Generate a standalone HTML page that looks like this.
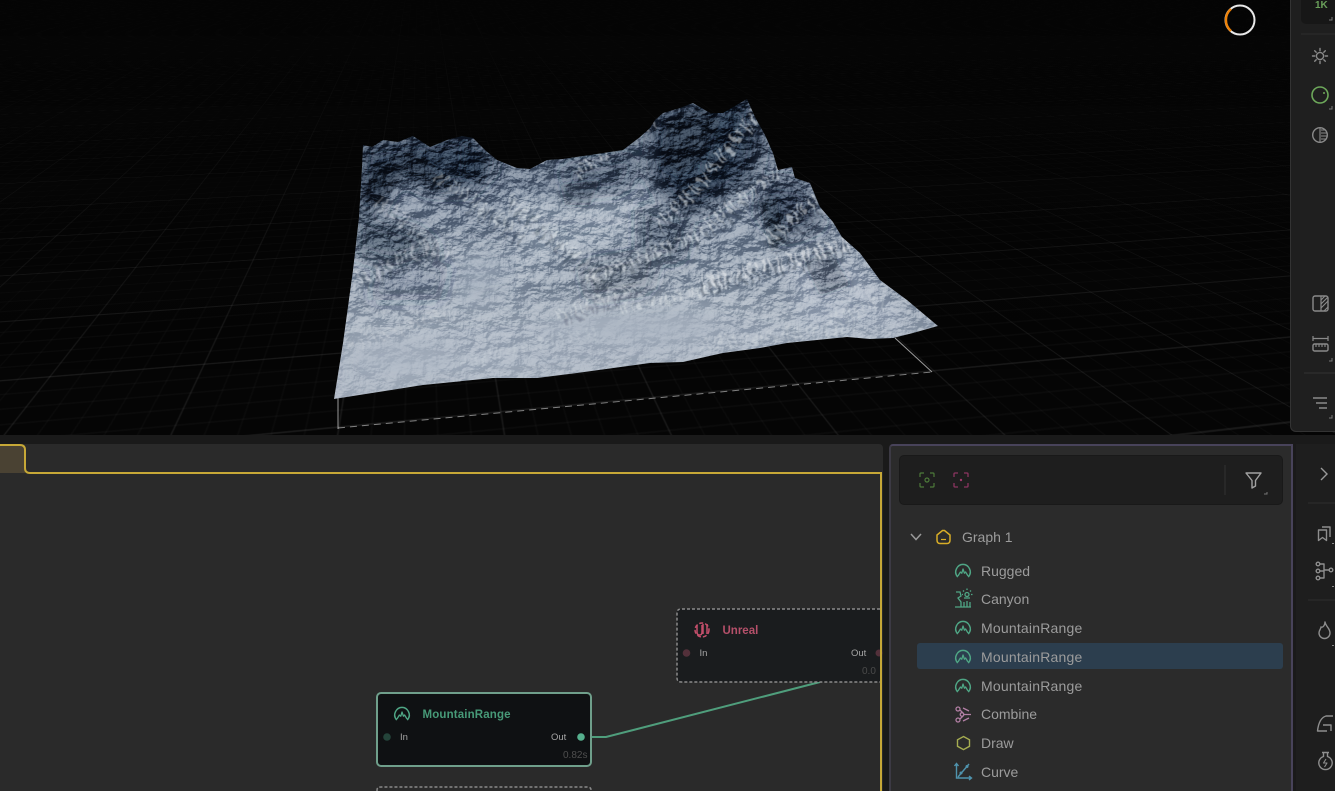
<!DOCTYPE html>
<html lang="en">
<head>
<meta charset="utf-8">
<title>Terrain graph editor</title>
<style>
html,body{margin:0;padding:0;width:1335px;height:791px;overflow:hidden;background:#1a1a1a;font-family:"Liberation Sans",sans-serif}
.abs{position:absolute}
#view{left:0;top:0;width:1335px;height:435px;background:#050505;overflow:hidden}
#grid{position:absolute;left:0;top:0;width:4600px;height:3300px;transform-origin:0 0;
transform:matrix3d(1.773,-.0288,0,.000303,.703,-.159,0,.001674,0,0,1,0,-2355.1,516.02,0,.0736);
background-image:
linear-gradient(to right,rgba(255,255,255,.055) 1px,transparent 1px),
linear-gradient(to bottom,rgba(255,255,255,.055) 2px,transparent 2px),
linear-gradient(to right,rgba(255,255,255,.022) 1px,transparent 1px),
linear-gradient(to bottom,rgba(255,255,255,.022) 2px,transparent 2px);
background-size:100px 100px,100px 100px,20px 20px,20px 20px}
#fade{left:0;top:0;width:1335px;height:435px;background:linear-gradient(to bottom,rgba(5,5,5,.9),rgba(5,5,5,.35) 45%,rgba(5,5,5,0) 85%)}
#toolbar{left:1290px;top:0;width:45px;height:432px;background:#1f1f1f;border-left:1px solid #333;border-bottom:1px solid #333;border-radius:0 0 0 6px;box-sizing:border-box}
#graph{left:0;top:444px;width:883px;height:347px;background:#2a2a2a;border-radius:0 4px 0 0}
#side{left:889px;top:444px;width:404px;height:347px;background:#2b2b2b;border-top:2px solid #48435a;border-left:2px solid #3c3a44;border-right:2px solid #48435a;box-sizing:border-box;border-radius:4px 0 0 0}
#rail{left:1296px;top:444px;width:39px;height:347px;background:#1e1e1e}
#bar{left:899px;top:455px;width:384px;height:50px;background:#1e1e1e;border:1px solid #191919;box-sizing:border-box;border-radius:5px}
#hl{left:917px;top:643px;width:366px;height:26px;background:#2c3e4e;border-radius:3px}
#over{left:0;top:0}
text{font-family:"Liberation Sans",sans-serif}
</style>
</head>
<body>
<div class="abs" id="view">
  <div id="grid"></div>
  <div class="abs" id="fade"></div>
</div>
<div class="abs" id="toolbar"></div>
<div class="abs" id="graph"></div>
<div class="abs" id="side"></div>
<div class="abs" id="rail"></div>
<div class="abs" id="bar"></div>
<div class="abs" id="hl"></div>

<svg class="abs" id="over" width="1335" height="791" viewBox="0 0 1335 791" xmlns="http://www.w3.org/2000/svg">
<defs>
  <clipPath id="terrain"><path id="tp" d="M363 145L372 147 383 140 398 142 413 136 430 147 447 140 462 136 473 138 485 150 497 160 517 168 530 169 547 160 563 159 590 155 623 150 640 137 650 128 655 120 663 113 680 108 693 103 710 113 723 113 735 106 747 99 755 117 765 135 773 153 778 170 792 167 795 178 810 183 820 207 833 222 842 237 860 253 880 280 907 300 938 326 913 333 893 338 870 339 847 337 817 340 787 343 760 348 723 353 683 362 650 363 577 373 537 378 493 378 423 385 334 399 343 343 353 270 359 217 362 167Z"/></clipPath>
  <linearGradient id="tg" x1="0" y1="100" x2="0" y2="400" gradientUnits="userSpaceOnUse">
    <stop offset="0" stop-color="#4a586b"/><stop offset=".3" stop-color="#7b899c"/><stop offset=".55" stop-color="#98a4b3"/><stop offset=".8" stop-color="#a8b2bf"/><stop offset="1" stop-color="#b0b8c5"/>
  </linearGradient>
  <filter id="b12" x="-30%" y="-30%" width="160%" height="160%"><feGaussianBlur stdDeviation="12"/></filter>
  <filter id="b8" x="-30%" y="-30%" width="160%" height="160%"><feGaussianBlur stdDeviation="8"/></filter>
  <filter id="b3" x="-30%" y="-30%" width="160%" height="160%"><feGaussianBlur stdDeviation="3"/></filter>
  <filter id="rough" filterUnits="userSpaceOnUse" x="320" y="90" width="640" height="320">
    <feTurbulence type="fractalNoise" baseFrequency=".08" numOctaves="3" seed="5" result="d"/>
    <feDisplacementMap in="SourceGraphic" in2="d" scale="13" xChannelSelector="R" yChannelSelector="G"/>
    <feGaussianBlur stdDeviation=".4"/>
  </filter>
  <linearGradient id="mg" x1="0" y1="100" x2="0" y2="400" gradientUnits="userSpaceOnUse">
    <stop offset="0" stop-color="#fff"/><stop offset=".6" stop-color="#ddd"/><stop offset=".85" stop-color="#777"/><stop offset="1" stop-color="#555"/>
  </linearGradient>
  <mask id="fadem" maskUnits="userSpaceOnUse" x="300" y="80" width="660" height="340">
    <rect x="300" y="80" width="660" height="340" fill="url(#mg)"/>
    <g filter="url(#b12)" fill="#000">
      <ellipse cx="630" cy="325" rx="95" ry="18" opacity=".85"/>
      <ellipse cx="400" cy="355" rx="60" ry="14" opacity=".7"/>
      <ellipse cx="480" cy="280" rx="26" ry="30" opacity=".6" transform="rotate(30 480 280)"/>
      <ellipse cx="575" cy="190" rx="35" ry="8" opacity=".5"/>
    </g>
  </mask>
  <filter id="n1" x="0" y="0" width="100%" height="100%" color-interpolation-filters="sRGB">
    <feTurbulence type="fractalNoise" baseFrequency=".05 .065" numOctaves="5" seed="23" result="t"/>
    <feDiffuseLighting in="t" surfaceScale="6" diffuseConstant="1" lighting-color="#fff" result="l"><feDistantLight azimuth="60" elevation="48"/></feDiffuseLighting>
    <feComponentTransfer><feFuncR type="linear" slope="1.4" intercept="-.52"/><feFuncG type="linear" slope="1.4" intercept="-.52"/><feFuncB type="linear" slope="1.4" intercept="-.52"/></feComponentTransfer>
  </filter>
  <symbol id="mtn" overflow="visible" viewBox="-10 -10 20 20">
    <path d="M-5.6 5.600C-9.800 .5-5.500-6.600 0-6.600S9.800 .5 5.600 5.600" fill="none" stroke="currentColor" stroke-width="1.500" stroke-linecap="round"/>
    <path d="M-4.800 4.600L-2.600 1-1.200 2.200 0-2 1.400 2.200 2.600 1 4.800 4.600" fill="none" stroke="currentColor" stroke-width="1.300" stroke-linejoin="round" stroke-linecap="round"/>
  </symbol>
</defs>

<!-- terrain helper outline -->
<path d="M338 428L932 372" stroke="#cfcfcf" stroke-opacity=".6" stroke-width="1" stroke-dasharray="7 5" fill="none"/>
<path d="M895 338L932 372M338 398V429" stroke="#d8d8d8" stroke-opacity=".7" stroke-width="1" fill="none"/>

<!-- terrain -->
<g clip-path="url(#terrain)" style="isolation:isolate">
  <rect x="320" y="90" width="640" height="320" fill="url(#tg)"/>
  <g filter="url(#b8)" fill="#aeb8c5">
    <path d="M500 200L660 190 640 240 540 260Z" opacity=".75"/>
    <path d="M340 320L700 290 920 330 700 370 340 400Z" opacity=".7"/>
    <path d="M790 260L860 265 910 325 800 335Z" opacity=".8"/>
    <path d="M400 240L560 240 520 300 380 320Z" opacity=".45"/>
  </g>
  <g filter="url(#b8)" fill="#27344a">
    <path d="M362 145L470 132 495 165 470 190 430 190 400 175 380 205 356 215Z"/>
    <path d="M655 118L747 98 762 135 752 178 720 200 690 215 672 205 650 175Z"/>
    <path d="M768 180L805 185 822 225 785 238 760 215Z" opacity=".8"/>
    <path d="M356 215L420 232 440 252 390 262 354 255Z" opacity=".65"/>
    <path d="M560 168L640 155 625 190 575 195Z" opacity=".45"/>
    <path d="M640 205L690 225 680 262 640 250Z" opacity=".45"/>
    <path d="M580 265L660 250 650 290 590 300Z" opacity=".3"/>
    <path d="M380 260L450 265 440 300 370 300Z" opacity=".25"/>
  </g>
  <g filter="url(#b3)" fill="#1f2b3e">
    <path d="M372 168L412 148 452 185 436 190 406 172 378 205 360 200Z" opacity=".75"/>
    <path d="M462 140L490 160 482 185 462 175Z" opacity=".65"/>
    <path d="M665 120L700 108 722 120 700 160 680 175 660 165Z" opacity=".75"/>
    <path d="M722 118L744 104 736 150 715 175 700 172Z" opacity=".65"/>
    <path d="M760 200L778 196 786 240 772 250Z" opacity=".6"/>
    <path d="M805 262L830 250 850 285 820 295Z" opacity=".35"/>
    <path d="M560 185L600 180 590 205 565 205Z" opacity=".35"/>
  </g>
  <g mask="url(#fadem)" style="mix-blend-mode:soft-light">
    <rect x="320" y="90" width="640" height="320" filter="url(#n1)"/>
  </g>
  <!-- dark ribs on flanks -->
  <g fill="none" stroke="#1d2738" stroke-dasharray="2 5 3 3 1.500 6 2.500 4" stroke-linecap="butt" filter="url(#rough)" opacity=".8">
    <path d="M765 118L705 192 662 232" stroke-width="15" stroke-opacity=".45" stroke-dashoffset="3"/>
    <path d="M820 205L772 248" stroke-width="15" stroke-opacity=".45" stroke-dashoffset="3"/>
    <path d="M852 250L702 290" stroke-width="14" stroke-opacity=".4" stroke-dashoffset="3"/>
    <path d="M782 180L702 238" stroke-width="13" stroke-opacity=".4" stroke-dashoffset="3"/>
    <path d="M655 130L580 178" stroke-width="12" stroke-opacity=".35" stroke-dashoffset="3"/>
    <path d="M505 200L560 250 605 292" stroke-width="13" stroke-opacity=".3" stroke-dashoffset="3"/>
    <path d="M372 205L442 262" stroke-width="15" stroke-opacity=".35" stroke-dashoffset="3"/>
    <path d="M432 182L522 242" stroke-width="14" stroke-opacity=".35" stroke-dashoffset="3"/>
    <path d="M590 285L700 242" stroke-width="13" stroke-opacity=".3" stroke-dashoffset="3"/>
    <path d="M560 322L640 292" stroke-width="11" stroke-opacity=".25" stroke-dashoffset="3"/>
    <path d="M360 285L432 252" stroke-width="14" stroke-opacity=".3" stroke-dashoffset="3"/>
  </g>
  <!-- lit ribs on flanks -->
  <g fill="none" stroke="#eceff1" stroke-dasharray="2 4 3 6 1.500 3 2.500 5" stroke-linecap="butt" filter="url(#rough)">
    <path d="M758 112L698 186 656 226" stroke-width="13" stroke-opacity=".5"/>
    <path d="M815 198L767 241" stroke-width="13" stroke-opacity=".5"/>
    <path d="M850 243L700 283" stroke-width="13" stroke-opacity=".55"/>
    <path d="M779 172L699 230" stroke-width="12" stroke-opacity=".5"/>
    <path d="M652 124L577 172" stroke-width="11" stroke-opacity=".45"/>
    <path d="M510 195L565 245 610 287" stroke-width="12" stroke-opacity=".4"/>
    <path d="M378 200L448 257" stroke-width="14" stroke-opacity=".35"/>
    <path d="M438 177L528 237" stroke-width="13" stroke-opacity=".4"/>
    <path d="M588 278L698 235" stroke-width="12" stroke-opacity=".45"/>
    <path d="M556 316L636 286" stroke-width="10" stroke-opacity=".4"/>
    <path d="M620 310L730 285" stroke-width="10" stroke-opacity=".4"/>
    <path d="M358 279L430 246" stroke-width="12" stroke-opacity=".35"/>
    <path d="M342 350L450 312" stroke-width="12" stroke-opacity=".18"/>
    <path d="M830 320L885 300" stroke-width="14" stroke-opacity=".25"/>
    <path d="M455 362L600 332" stroke-width="12" stroke-opacity=".15"/>
    <path d="M700 345L860 325" stroke-width="14" stroke-opacity=".25"/>
  </g>
</g>

<!-- loader ring -->
<circle cx="1240" cy="20" r="14.500" fill="none" stroke="#e8e8e8" stroke-width="2"/>
<path d="M1231 9A14.500 14.500 0 0 0 1231 31" fill="none" stroke="#ee8208" stroke-width="2.400"/>

<!-- top toolbar -->
<rect x="1301" y="-6" width="40" height="30" rx="5" fill="#171717"/>
<text x="1315" y="8" font-size="10" font-weight="700" fill="#6aa05a">1K</text>
<path d="M1332 17V20H1329" stroke="#777" stroke-width="1" fill="none"/>
<path d="M1301 34H1335" stroke="#2c2c2c" stroke-width="1"/>
<g fill="none" stroke="#8a8a8a" stroke-width="1.400">
  <circle cx="1320" cy="56" r="3.600"/>
  <path d="M1320 48.500v2.200M1320 61.300v2.200M1312.500 56h2.200M1325.300 56h2.200M1314.700 50.700l1.500 1.500M1323.800 59.800l1.500 1.500M1314.700 61.300l1.500-1.500M1323.800 52.200l1.500-1.500" stroke-linecap="round"/>
  <circle cx="1320" cy="135" r="7.300"/>
  <path d="M1320 127.700v14.600M1321 130h4.500M1321 133h6M1321 136h6M1321 139h4.500" stroke-width="1.100"/>
  <rect x="1313" y="296" width="15" height="15" rx="2"/>
  <path d="M1321 296v15M1321 300l4-4M1321 304l7-7M1321 308l7-7M1324 311l4-4" stroke-width="1.200"/>
  <path d="M1313 338.500h15M1313 336v5M1328 336v5" stroke-width="1.200"/>
  <rect x="1313" y="344" width="15" height="7" rx="1.500"/>
  <path d="M1316 344v3M1319 344v3M1322 344v3M1325 344v3" stroke-width="1.100"/>
  <path d="M1313 398h14M1316 403h11M1319 408h8" stroke-width="1.400"/>
</g>
<circle cx="1320" cy="95" r="8" fill="none" stroke="#6da85a" stroke-width="1.600"/>
<circle cx="1324" cy="93" r="1" fill="#6da85a"/>
<path d="M1332 106V109H1329M1332 358V361H1329M1332 415V418H1329" stroke="#777" stroke-width="1" fill="none"/>
<path d="M1304 373H1335" stroke="#333" stroke-width="1"/>

<!-- graph frame -->
<rect x="0" y="446" width="25" height="27" fill="#4a4233"/>
<path d="M0 445H20Q25 445 25 450V468Q25 473 30 473H881V791" fill="none" stroke="#c7a837" stroke-width="2"/>

<!-- edge -->
<path d="M592 737H606L820 682" fill="none" stroke="#4f9e7c" stroke-width="2"/>

<!-- Unreal node -->
<path d="M880 609H681Q677 609 677 613V678Q677 682 681 682H880Z" fill="#1a1c1e"/>
<path d="M880 609H681Q677 609 677 613V678Q677 682 681 682H880" fill="none" stroke="#8a8a8a" stroke-width="1.500" stroke-dasharray="3 2"/>
<g fill="none" stroke="#c44f6b" stroke-width="1.500">
  <circle cx="702" cy="630" r="7" stroke-dasharray="4 2"/>
  <path d="M697 625v7q0 3 2.500 3t2.500-3v-7M703 624v10M707 624v10"/>
</g>
<text x="722.500" y="634" font-size="11.500" font-weight="700" fill="#b5506a">Unreal</text>
<circle cx="686.500" cy="653" r="3.800" fill="#53303a"/>
<text x="699.500" y="656" font-size="9.500" fill="#a5a5a5">In</text>
<text x="851" y="656" font-size="9.500" fill="#a5a5a5">Out</text>
<circle cx="879" cy="653" r="3.500" fill="#53303a"/>
<text x="862" y="674" font-size="10" fill="#4a4a4a" font-family="Liberation Mono">0.0</text>
<path d="M881 473V791" stroke="#c7a837" stroke-width="2" fill="none"/>

<!-- MountainRange node -->
<rect x="377" y="693" width="214" height="73" rx="4" fill="#0f1113" stroke="#6f9f8b" stroke-width="2"/>
<use href="#mtn" x="392" y="704" width="20" height="20" color="#4fa685"/>
<text x="422.500" y="718" font-size="11.500" font-weight="700" letter-spacing=".15" fill="#479a78">MountainRange</text>
<circle cx="387" cy="737" r="3.800" fill="#24443a"/>
<text x="400" y="740" font-size="9.500" fill="#a5a5a5">In</text>
<text x="551" y="740" font-size="9.500" fill="#a5a5a5">Out</text>
<circle cx="581" cy="737" r="3.800" fill="#56b08e"/>
<text x="563" y="758" font-size="10" fill="#4e4e4e" font-family="Liberation Mono">0.82s</text>
<path d="M377 791V790Q377 787 381 787H587Q591 787 591 790V791" fill="none" stroke="#8a8a8a" stroke-width="1.500" stroke-dasharray="3 2"/>

<!-- side toolbar icons -->
<g fill="none" stroke="#4d7a3a" stroke-width="1.200">
  <path d="M920 477v-3q0-1 1-1h3M930 473h3q1 0 1 1v3M934 483v3q0 1-1 1h-3M924 487h-3q-1 0-1-1v-3"/>
  <circle cx="927" cy="480" r="2"/>
</g>
<g fill="none" stroke="#8a3560" stroke-width="1.300">
  <path d="M954 477v-3q0-1 1-1h3M964 473h3q1 0 1 1v3M968 483v3q0 1-1 1h-3M958 487h-3q-1 0-1-1v-3"/>
</g>
<circle cx="961" cy="480" r="1.200" fill="#a03a6c"/>
<path d="M1225 465V495" stroke="#2b2b2b" stroke-width="1.500"/>
<path d="M1246 473H1261L1255.500 480.500V486L1252 488V480.500Z" fill="none" stroke="#a2a2a2" stroke-width="1.400" stroke-linejoin="round"/>
<path d="M1267 492V494H1264" stroke="#777" stroke-width="1" fill="none"/>

<!-- tree -->
<path d="M911 534L916 539.500 921 534" fill="none" stroke="#9a9a9a" stroke-width="1.500"/>
<path d="M937 538V535L942.500 530.500 944.500 530.500 950 535V540Q950 543.500 947 543.500H940Q937 543.500 937 540Z" fill="none" stroke="#d8ad27" stroke-width="1.500"/>
<path d="M941 539.500H946" stroke="#d8ad27" stroke-width="1.200"/>
<g font-size="14" fill="#9c9c9c">
  <text x="962" y="542">Graph 1</text>
  <text x="981" y="576">Rugged</text>
  <text x="981" y="604">Canyon</text>
  <text x="981" y="633" letter-spacing=".2">MountainRange</text>
  <text x="981" y="662" letter-spacing=".2">MountainRange</text>
  <text x="981" y="691" letter-spacing=".2">MountainRange</text>
  <text x="981" y="719">Combine</text>
  <text x="981" y="748">Draw</text>
  <text x="981" y="777">Curve</text>
</g>
<use href="#mtn" x="953" y="561" width="20" height="20" color="#4fa685"/>
<use href="#mtn" x="953" y="618" width="20" height="20" color="#4fa685"/>
<use href="#mtn" x="953" y="647" width="20" height="20" color="#4fa685"/>
<use href="#mtn" x="953" y="676" width="20" height="20" color="#4fa685"/>
<g fill="none" stroke="#4fa685" stroke-width="1.300">
  <path d="M955 607H971M956 592H960L961 596 958 598 961 602V607M964 602V607M967 601V607M970 602V607"/>
  <circle cx="967" cy="594.500" r="2"/>
  <path d="M967 590v-1.500M971 594.500h1.500M963 594.500h-1M970 591.500l1-1M964 591.500l-1-1M964 598h6"/>
</g>
<g fill="none" stroke="#b27fa4" stroke-width="1.300">
  <circle cx="958" cy="709" r="2"/><circle cx="958" cy="720" r="2"/><circle cx="962" cy="714.500" r="1.800"/>
  <path d="M960 710L963 713M960 719L963 716M964 714.500H971M963 708L969 711M963 721L969 718"/>
</g>
<path d="M963.500 736.500L969.500 739.800V746.300L963.500 749.600 957.500 746.300V739.800Z" fill="none" stroke="#a6ad51" stroke-width="1.400"/>
<g fill="none" stroke="#4f93ad" stroke-width="1.400">
  <path d="M956.500 764V778H971M954.500 766L956.500 763.500 958.500 766M969 776L971.500 778 969 780M958 777L969 764"/>
</g>
<circle cx="961" cy="773" r="1.500" fill="#4f93ad"/><circle cx="967" cy="766.500" r="1.500" fill="#4f93ad"/>

<!-- right rail -->
<path d="M1321 468L1327 474 1321 480" fill="none" stroke="#9a9a9a" stroke-width="1.400"/>
<path d="M1308 503H1335M1308 600H1335" stroke="#2f2f2f" stroke-width="1"/>
<g fill="none" stroke="#8e8e8e" stroke-width="1.400" stroke-linejoin="round">
  <path d="M1318.500 530H1326.500V540.500L1322.500 537.500 1318.500 540.500Z"/>
  <path d="M1322 527H1330V537"/>
  <circle cx="1318" cy="564" r="1.800"/><circle cx="1318" cy="571" r="1.800"/><circle cx="1318" cy="578" r="1.800"/><circle cx="1331" cy="570" r="1.800"/>
  <path d="M1320 564H1324V578H1320M1320 571H1324M1324 570H1329"/>
  <path d="M1325 622C1326 627 1330 628 1330 633A5.500 5.500 0 0 1 1319 633C1319 630 1321 629 1321 627 1323 628 1325 625 1325 622Z"/>
  <path d="M1333 716H1326Q1319 718 1317.500 731H1327M1323 725H1331V731"/>
  <path d="M1322 752.500H1329M1323.500 752.500V756.500A6.700 6.700 0 1 0 1327.500 756.500V752.500"/>
  <path d="M1326 759L1323.500 763H1327L1324.500 767" stroke-width="1.100"/>
</g>
<path d="M1333 543V544M1333 586V587M1333 645V646" stroke="#888" stroke-width="2"/>
</svg>
</body>
</html>
